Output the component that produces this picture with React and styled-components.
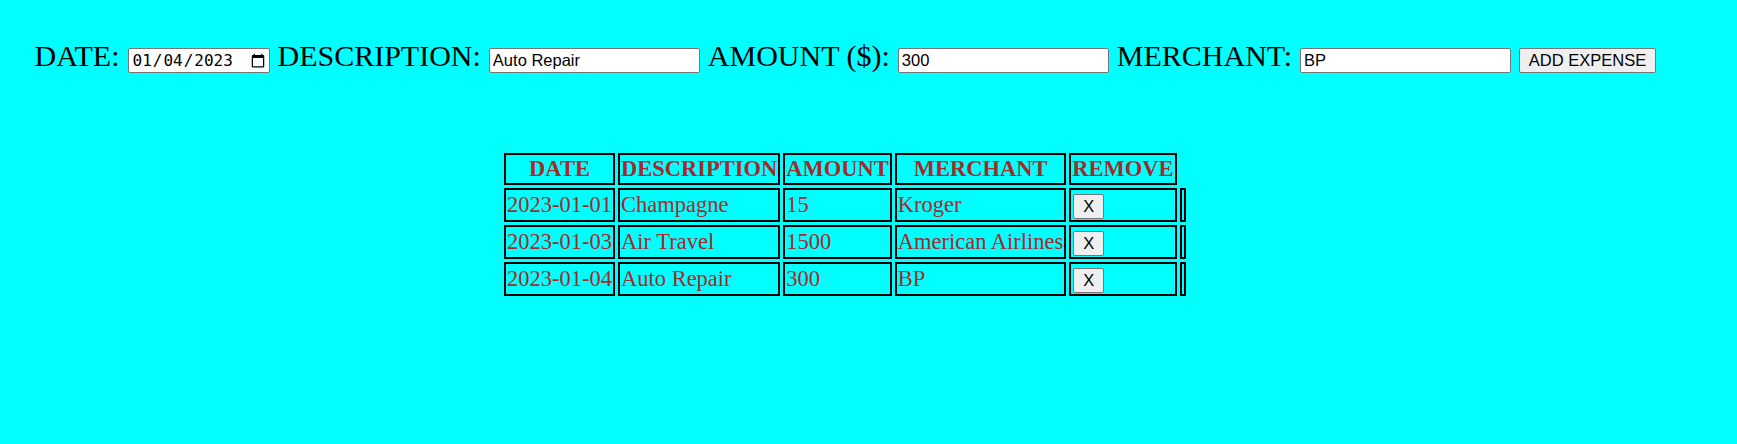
import React, { useState } from "react";
import styled, { createGlobalStyle } from "styled-components";

const GlobalStyle = createGlobalStyle`
  html, body {
    margin: 0;
    padding: 0;
    background: #00ffff;
  }
  body {
    font-family: "Liberation Serif", "Times New Roman", serif;
  }
`;

const Page = styled.div`
  min-height: 444px;
  background: #00ffff;
  display: flex;
  flex-direction: column;
`;

const Form = styled.form`
  display: flex;
  align-items: flex-end;
  gap: 8px;
  padding: 39px 0 0 34.5px;
  line-height: normal;
`;

const Label = styled.label`
  font-family: "Liberation Serif", "Times New Roman", serif;
  font-size: 30px;
  color: #000;
`;

const TextInput = styled.input`
  box-sizing: border-box;
  width: ${(p) => p.$w || 211}px;
  height: 25px;
  margin: 0;
  padding: 0 3px;
  border: 1px solid #767676;
  border-radius: 2px;
  background: #fff;
  color: #000;
  font-family: ${(p) =>
    p.$mono ? '"DejaVu Sans Mono", "Liberation Mono", monospace' : '"Liberation Sans", Arial, sans-serif'};
  font-size: ${(p) => (p.$mono ? 16 : 16.5)}px;
  outline: none;
  &::-webkit-calendar-picker-indicator {
    margin: 0;
    padding: 0;
  }
`;

const Button = styled.button`
  box-sizing: border-box;
  height: 25px;
  width: ${(p) => p.$w}px;
  margin: 0;
  padding: 0;
  border: 1px solid #767676;
  border-radius: 2px;
  background: #efefef;
  color: #000;
  font-family: "Liberation Sans", Arial, sans-serif;
  font-size: 16.5px;
  line-height: 23px;
  text-align: center;
  cursor: pointer;
`;

const TableWrap = styled.div`
  padding: 77px 0 0 501px;
`;

const Table = styled.table`
  border-collapse: separate;
  border-spacing: 3px 3px;
  color: #a52a2a;
  font-family: "Liberation Serif", "Times New Roman", serif;
  font-size: 22.5px;
`;

const Th = styled.th`
  border: 2px solid #000;
  padding: 1px;
  line-height: 26px;
  font-weight: bold;
  text-align: center;
  white-space: nowrap;
`;

const Td = styled.td`
  border: 2px solid #000;
  padding: 1px;
  line-height: 28px;
  height: 28px;
  text-align: left;
  white-space: nowrap;
  vertical-align: middle;
`;

const RemoveButton = styled(Button)`
  display: block;
  margin: 2px 0 0 1px;
`;

const initial = [
  { date: "2023-01-01", description: "Champagne", amount: "15", merchant: "Kroger" },
  { date: "2023-01-03", description: "Air Travel", amount: "1500", merchant: "American Airlines" },
  { date: "2023-01-04", description: "Auto Repair", amount: "300", merchant: "BP" },
];

export default function App() {
  const [rows, setRows] = useState(initial);
  const [date, setDate] = useState("2023-01-04");
  const [description, setDescription] = useState("Auto Repair");
  const [amount, setAmount] = useState("300");
  const [merchant, setMerchant] = useState("BP");

  const add = (e) => {
    e.preventDefault();
    setRows((r) => [...r, { date, description, amount, merchant }]);
  };

  return (
    <Page>
      <GlobalStyle />
      <Form onSubmit={add}>
        <Label htmlFor="date">DATE:</Label>
        <TextInput
          id="date"
          type="date"
          $w={142}
          $mono
          value={date}
          onChange={(e) => setDate(e.target.value)}
        />
        <Label htmlFor="desc">DESCRIPTION:</Label>
        <TextInput id="desc" type="text" value={description} onChange={(e) => setDescription(e.target.value)} />
        <Label htmlFor="amount">AMOUNT ($):</Label>
        <TextInput id="amount" type="text" value={amount} onChange={(e) => setAmount(e.target.value)} />
        <Label htmlFor="merchant">MERCHANT:</Label>
        <TextInput id="merchant" type="text" value={merchant} onChange={(e) => setMerchant(e.target.value)} />
        <Button type="submit" $w={137}>ADD EXPENSE</Button>
      </Form>
      <TableWrap>
        <Table>
          <thead>
            <tr>
              <Th>DATE</Th>
              <Th>DESCRIPTION</Th>
              <Th>AMOUNT</Th>
              <Th>MERCHANT</Th>
              <Th>REMOVE</Th>
            </tr>
          </thead>
          <tbody>
            {rows.map((r, i) => (
              <tr key={i}>
                <Td>{r.date}</Td>
                <Td>{r.description}</Td>
                <Td>{r.amount}</Td>
                <Td>{r.merchant}</Td>
                <Td>
                  <RemoveButton type="button" $w={31} onClick={() => setRows((rs) => rs.filter((_, j) => j !== i))}>
                    X
                  </RemoveButton>
                </Td>
                <Td />
              </tr>
            ))}
          </tbody>
        </Table>
      </TableWrap>
    </Page>
  );
}
